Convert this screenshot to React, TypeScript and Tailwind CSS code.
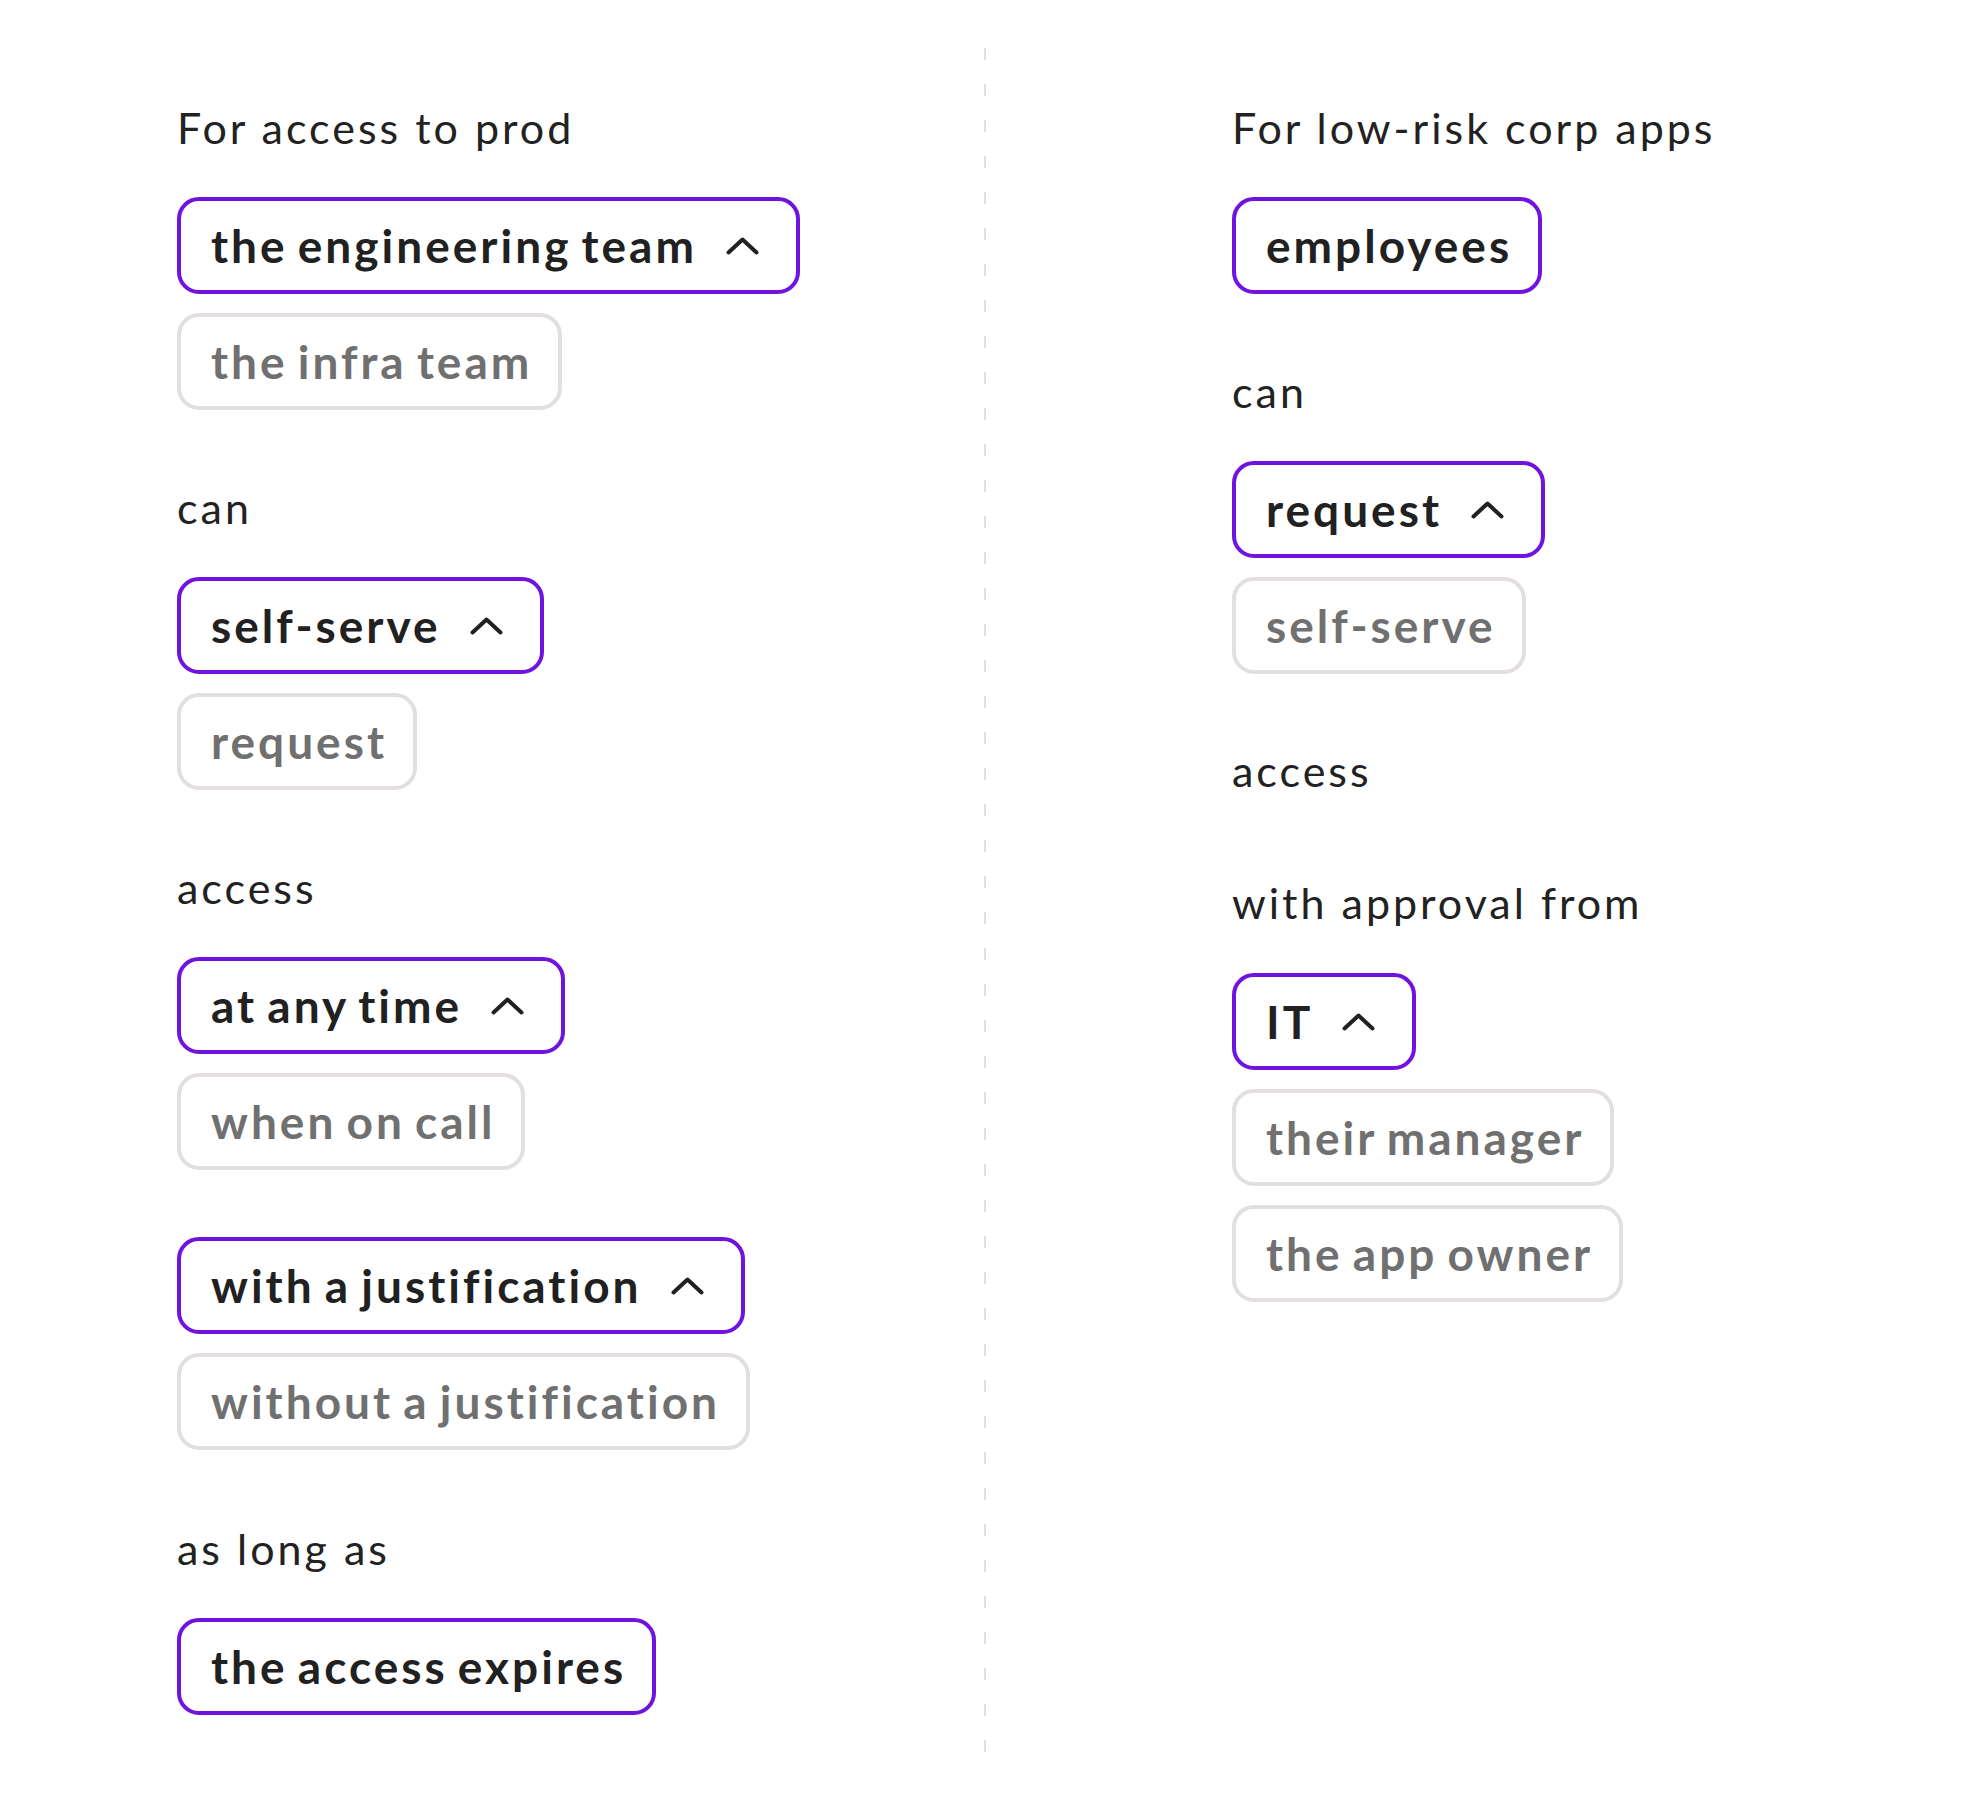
import type { ReactNode } from "react";

type Chip = { label: string; active?: boolean; open?: boolean };

function ChevronUp() {
  return (
    <svg width="33" height="18" viewBox="0 0 33 18" fill="none" className="ml-[29px] mr-[11px] shrink-0">
      <path d="M2.5 15.5 16.5 2.5 30.5 15.5" stroke="#212121" strokeWidth="4" strokeLinecap="round" strokeLinejoin="round" />
    </svg>
  );
}

function Option({ label, active, open }: Chip) {
  return (
    <div
      className={
        active
          ? "flex h-[97px] w-fit items-center rounded-[22px] border-4 border-[#7013df] pl-[30px] pr-[26px] text-[46px] font-bold leading-none tracking-[3px] [word-spacing:-4px] text-[#212121]"
          : "flex h-[97px] w-fit items-center rounded-[22px] border-4 border-[#e4dfdf] pl-[30px] pr-[26px] text-[46px] font-bold leading-none tracking-[3px] [word-spacing:-4px] text-[#707070]"
      }
    >
      <span>{label}</span>
      {open && <ChevronUp />}
    </div>
  );
}

function Group({ items, className }: { items: Chip[]; className: string }) {
  return (
    <div className={"flex flex-col gap-[19px] " + className}>
      {items.map((c) => (
        <Option key={c.label} {...c} />
      ))}
    </div>
  );
}

function Label({ children, className }: { children: ReactNode; className?: string }) {
  return (
    <p className={"h-[48px] text-[43px] leading-[48px] tracking-[3px] text-[#222222] " + (className ?? "")}>
      {children}
    </p>
  );
}

export default function App() {
  return (
    <div className="flex min-h-[1812px] w-[1968px] bg-white pl-[177px] font-['Lato',sans-serif]">
      {/* production policy */}
      <div className="flex w-[807px] flex-col pt-[104px]">
        <Label>For access to prod</Label>
        <Group
          className="mt-[45px]"
          items={[
            { label: "the engineering team", active: true, open: true },
            { label: "the infra team" },
          ]}
        />
        <Label className="mt-[74px]">can</Label>
        <Group
          className="mt-[45px]"
          items={[
            { label: "self-serve", active: true, open: true },
            { label: "request" },
          ]}
        />
        <Label className="mt-[74px]">access</Label>
        <Group
          className="mt-[45px]"
          items={[
            { label: "at any time", active: true, open: true },
            { label: "when on call" },
          ]}
        />
        <Group
          className="mt-[67px]"
          items={[
            { label: "with a justification", active: true, open: true },
            { label: "without a justification" },
          ]}
        />
        <Label className="mt-[75px]">as long as</Label>
        <Group className="mt-[45px]" items={[{ label: "the access expires", active: true }]} />
      </div>

      <div className="mt-[48px] h-[1715px] w-[2px] shrink-0 bg-[repeating-linear-gradient(to_bottom,#e4dfdf_0_12px,transparent_12px_36px)]" />

      {/* corp apps policy */}
      <div className="ml-[246px] flex flex-col pt-[104px]">
        <Label>For low-risk corp apps</Label>
        <Group className="mt-[45px]" items={[{ label: "employees", active: true }]} />
        <Label className="mt-[74px]">can</Label>
        <Group
          className="mt-[45px]"
          items={[
            { label: "request", active: true, open: true },
            { label: "self-serve" },
          ]}
        />
        <Label className="mt-[73px]">access</Label>
        <Label className="mt-[84px]">with approval from</Label>
        <Group
          className="mt-[46px]"
          items={[
            { label: "IT", active: true, open: true },
            { label: "their manager" },
            { label: "the app owner" },
          ]}
        />
      </div>
    </div>
  );
}
